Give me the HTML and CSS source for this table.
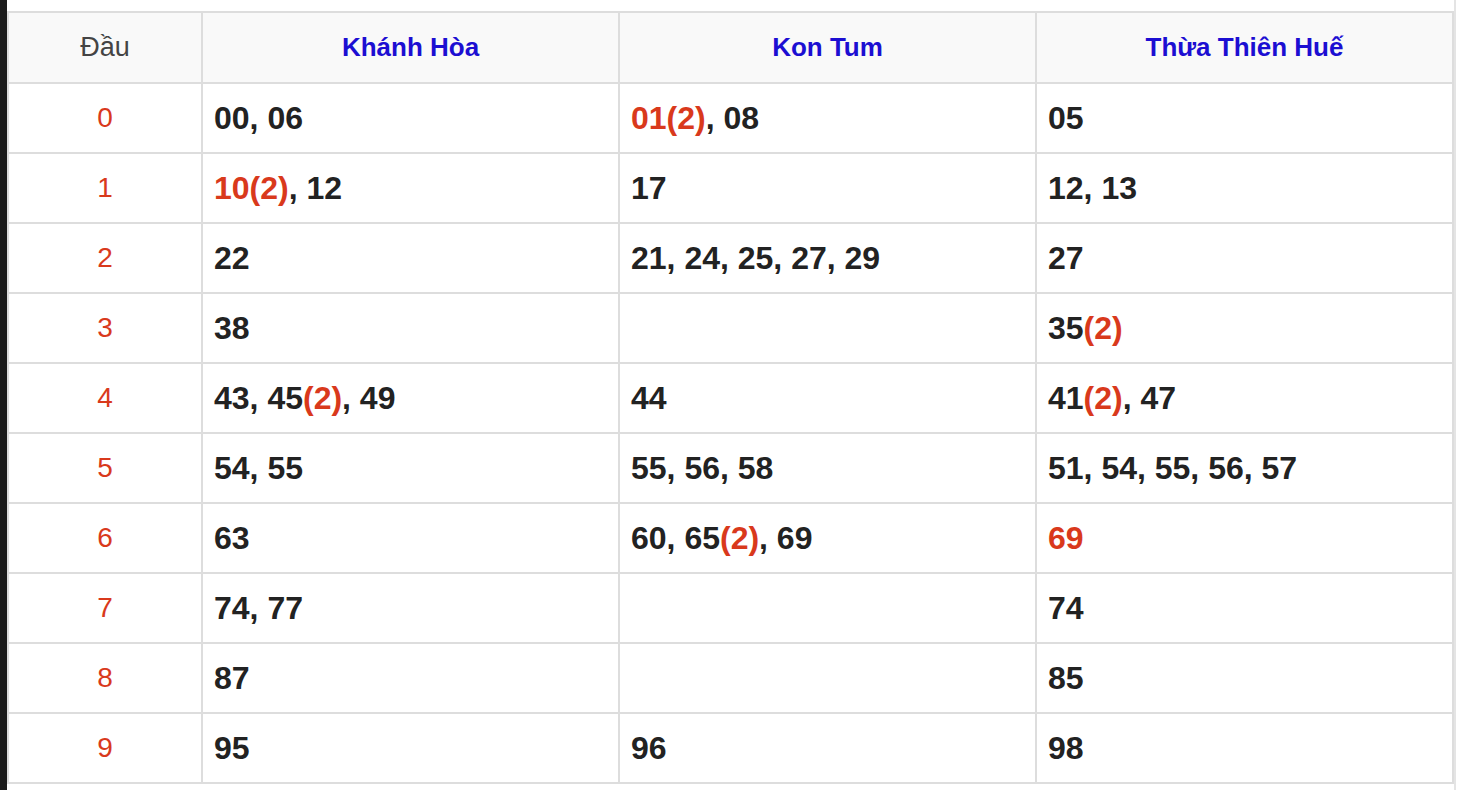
FILE: index.html
```html
<!DOCTYPE html>
<html lang="vi">
<head>
<meta charset="utf-8">
<title>Thống kê đầu</title>
<link rel="stylesheet" href="styles.css">
</head>
<body>
<div class="page">
  <div class="side"></div>
  <div class="content">
    <table class="loto">
      <colgroup>
        <col class="c-dau">
        <col class="c-prov">
        <col class="c-prov">
        <col class="c-prov">
      </colgroup>
      <thead>
        <tr>
          <th class="dau-h">Đầu</th>
          <th>Khánh Hòa</th>
          <th>Kon Tum</th>
          <th>Thừa Thiên Huế</th>
        </tr>
      </thead>
      <tbody>
        <tr><td class="dau">0</td><td>00, 06</td><td><span class="hot">01(2)</span>, 08</td><td>05</td></tr>
        <tr><td class="dau">1</td><td><span class="hot">10(2)</span>, 12</td><td>17</td><td>12, 13</td></tr>
        <tr><td class="dau">2</td><td>22</td><td>21, 24, 25, 27, 29</td><td>27</td></tr>
        <tr><td class="dau">3</td><td>38</td><td></td><td>35<span class="hot">(2)</span></td></tr>
        <tr><td class="dau">4</td><td>43, 45<span class="hot">(2)</span>, 49</td><td>44</td><td>41<span class="hot">(2)</span>, 47</td></tr>
        <tr><td class="dau">5</td><td>54, 55</td><td>55, 56, 58</td><td>51, 54, 55, 56, 57</td></tr>
        <tr><td class="dau">6</td><td>63</td><td>60, 65<span class="hot">(2)</span>, 69</td><td><span class="hot">69</span></td></tr>
        <tr><td class="dau">7</td><td>74, 77</td><td></td><td>74</td></tr>
        <tr><td class="dau">8</td><td>87</td><td></td><td>85</td></tr>
        <tr><td class="dau">9</td><td>95</td><td>96</td><td>98</td></tr>
      </tbody>
    </table>
  </div>
  <div class="edge"></div>
</div>
</body>
</html>
```

FILE: styles.css
```css
html, body {
  margin: 0;
  padding: 0;
  background: #ffffff;
}

.page {
  display: flex;
  height: 790px;
  overflow: hidden;
}

.side {
  width: 7px;
  flex: none;
  background: #1c1c1c;
}

.content {
  width: 1447px;
  flex: none;
  padding-top: 11px;
}

.edge {
  width: 2px;
  flex: none;
  background: #e4e4e4;
}

.loto {
  width: 1447px;
  border-collapse: collapse;
  table-layout: fixed;
  font-family: "Liberation Sans", Arial, sans-serif;
  border: 2px solid #dddddd;
}

.c-dau { width: 194px; }

.loto th,
.loto td {
  border: 2px solid #dddddd;
  padding: 0 11px;
  vertical-align: middle;
}

.loto th {
  height: 69px;
  background: #f9f9f9;
  color: #1c0ed2;
  font-size: 26px;
  font-weight: bold;
  text-align: center;
}

.loto th.dau-h {
  color: #444444;
  font-size: 27px;
  font-weight: normal;
}

.loto td {
  height: 68px;
  color: #222222;
  font-size: 32px;
  font-weight: bold;
  text-align: left;
}

.loto td.dau {
  color: #d9391c;
  font-size: 28px;
  font-weight: normal;
  text-align: center;
}

.hot {
  color: #d9391c;
}
```
